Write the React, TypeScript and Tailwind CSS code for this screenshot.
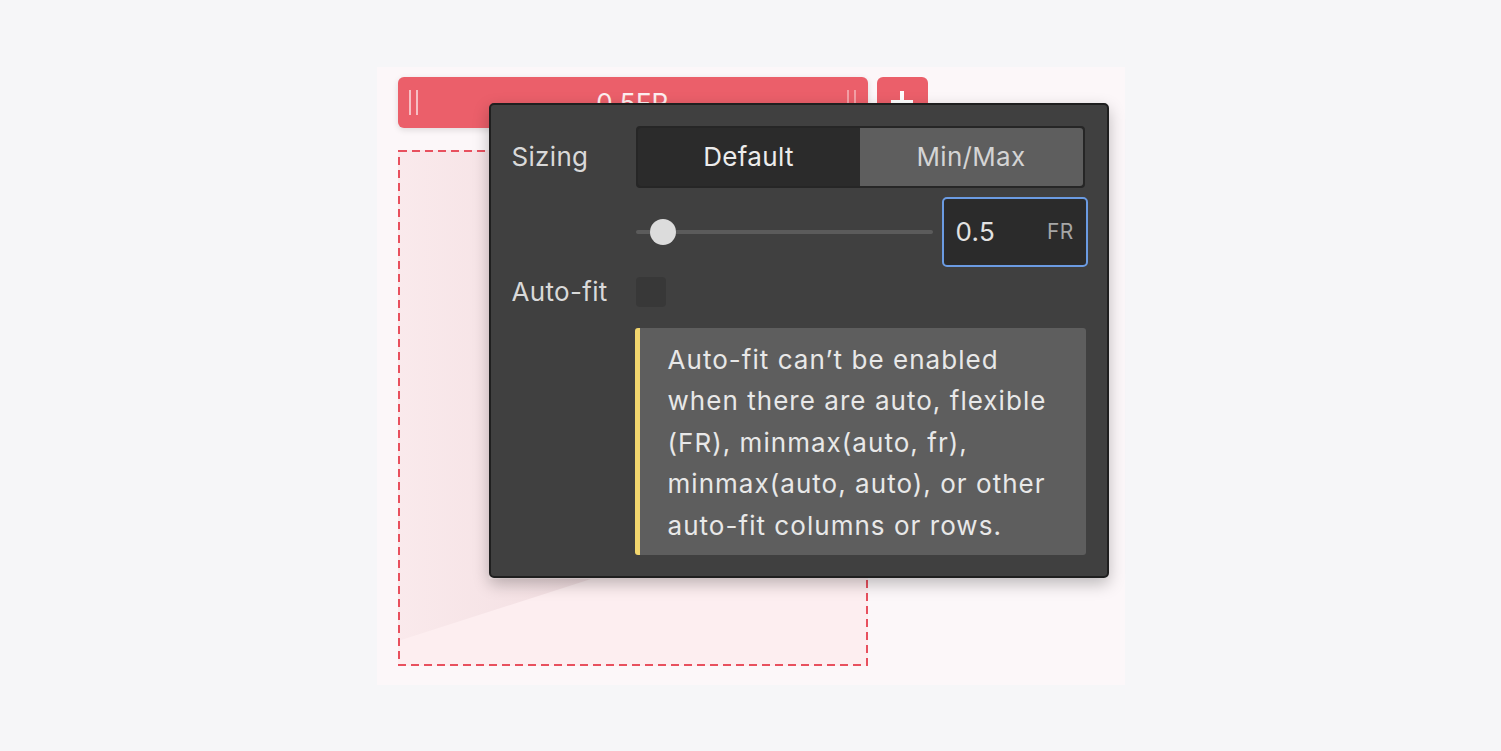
import React from 'react';

const font = { fontFamily: 'Inter, "Noto Sans", sans-serif' };

const GripLines: React.FC<{ faded?: boolean }> = ({ faded }) => (
  <div className={`flex gap-[5px] h-[25px] ${faded ? 'opacity-40' : 'opacity-60'}`}>
    <span className="w-[2px] h-full bg-white" />
    <span className="w-[2px] h-full bg-white" />
  </div>
);

const App: React.FC = () => {
  return (
    <div className="w-full h-[751px] bg-[#f6f6f8] flex items-center justify-center tracking-[0.02em]" style={font}>
      {/* Canvas */}
      <div className="relative w-[748px] h-[618px] bg-[#fcf7f9] pl-[21px] pt-[10px]">
        {/* Track header */}
        <div className="flex gap-[9px]">
          <div className="w-[470px] h-[51px] rounded-[6px] bg-[#eb5f6a] shadow-[0_2px_6px_rgba(0,0,0,0.12)] flex items-center justify-between px-[11px]">
            <GripLines />
            <span className="text-[26px] text-white/90 leading-none pt-[2px]">0.5FR</span>
            <GripLines faded />
          </div>
          <div className="w-[51px] h-[51px] rounded-[6px] bg-[#eb5f6a] flex items-center justify-center">
            <svg width="26" height="26" viewBox="0 0 26 26">
              <path d="M13 2v22M2 13h22" stroke="white" strokeWidth="4" />
            </svg>
          </div>
        </div>

        {/* Grid cell */}
        <div className="relative mt-[22px] w-[470px] h-[516px] bg-[#fdeef0]">
          <svg className="absolute left-0 top-0" width="470" height="516" viewBox="0 0 470 516">
            <defs>
              <linearGradient id="sh" x1="0" y1="0" x2="1" y2="0">
                <stop offset="0" stopColor="#e8cfd3" stopOpacity="0.15" />
                <stop offset="1" stopColor="#e3c9cd" stopOpacity="0.45" />
              </linearGradient>
            </defs>
            <polygon points="0,0 91,0 91,429 193,429 0,491" fill="url(#sh)" />
            <rect x="1" y="1" width="468" height="514" fill="none" stroke="#e8505e" strokeWidth="2" strokeDasharray="8 5" />
          </svg>
        </div>

        {/* Popover */}
        <div className="absolute left-[112px] top-[36px] w-[620px] h-[475px] bg-[#404040] border-2 border-[#1f1f1f] rounded-[5px] shadow-[0_6px_16px_rgba(0,0,0,0.25)] pt-[21px] pl-[21px] pr-[22px] text-[#d9d9d9] text-[26px]">
          <div className="grid grid-cols-[124px_1fr] gap-y-0">
            {/* Sizing */}
            <div className="h-[62px] flex items-center">Sizing</div>
            <div className="w-[449px] h-[62px] flex rounded-[4px] border-2 border-[#262626] bg-[#262626]">
              <div className="w-[222px] h-full bg-[#2b2b2b] rounded-l-[3px] flex items-center justify-center text-[#ececec]">
                Default
              </div>
              <div className="flex-1 h-full bg-[#5e5e5e] rounded-r-[3px] flex items-center justify-center text-[#d4d4d4]">
                Min/Max
              </div>
            </div>

            {/* Slider */}
            <div />
            <div className="mt-[9px] flex items-center h-[70px]">
              <div className="relative w-[297px] h-[4px] rounded-full bg-[#5b5b5b]">
                <span className="absolute left-[14px] top-1/2 -translate-y-1/2 w-[26px] h-[26px] rounded-full bg-[#dcdcdc]" />
              </div>
              <div className="ml-[9px] w-[146px] h-[70px] rounded-[5px] border-2 border-[#6b9be2] bg-[#2b2b2b] flex items-center justify-between pl-[12px] pr-[12px]">
                <span className="text-[26px] text-[#e2e2e2]">0.5</span>
                <span className="text-[21px] text-[#a6a6a6]">FR</span>
              </div>
            </div>

            {/* Auto-fit */}
            <div className="mt-[10px] h-[30px] flex items-center">Auto-fit</div>
            <div className="mt-[10px] h-[30px]">
              <div className="w-[30px] h-[30px] rounded-[4px] bg-[#383838]" />
            </div>

            {/* Warning */}
            <div />
            <div className="mt-[21px] w-[451px] h-[227px] -ml-[1px] rounded-[3px] bg-[#5e5e5e] border-l-[5px] border-[#f2d66e] pl-[28px] pr-[26px] pt-[11px] text-[26px] leading-[41.5px] tracking-[0.04em] text-[#e8e8e8]">
              Auto-fit can’t be enabled when there are auto, flexible (FR), minmax(auto, fr), minmax(auto, auto), or other auto-fit columns or rows.
            </div>
          </div>
        </div>
      </div>
    </div>
  );
};

export default App;
